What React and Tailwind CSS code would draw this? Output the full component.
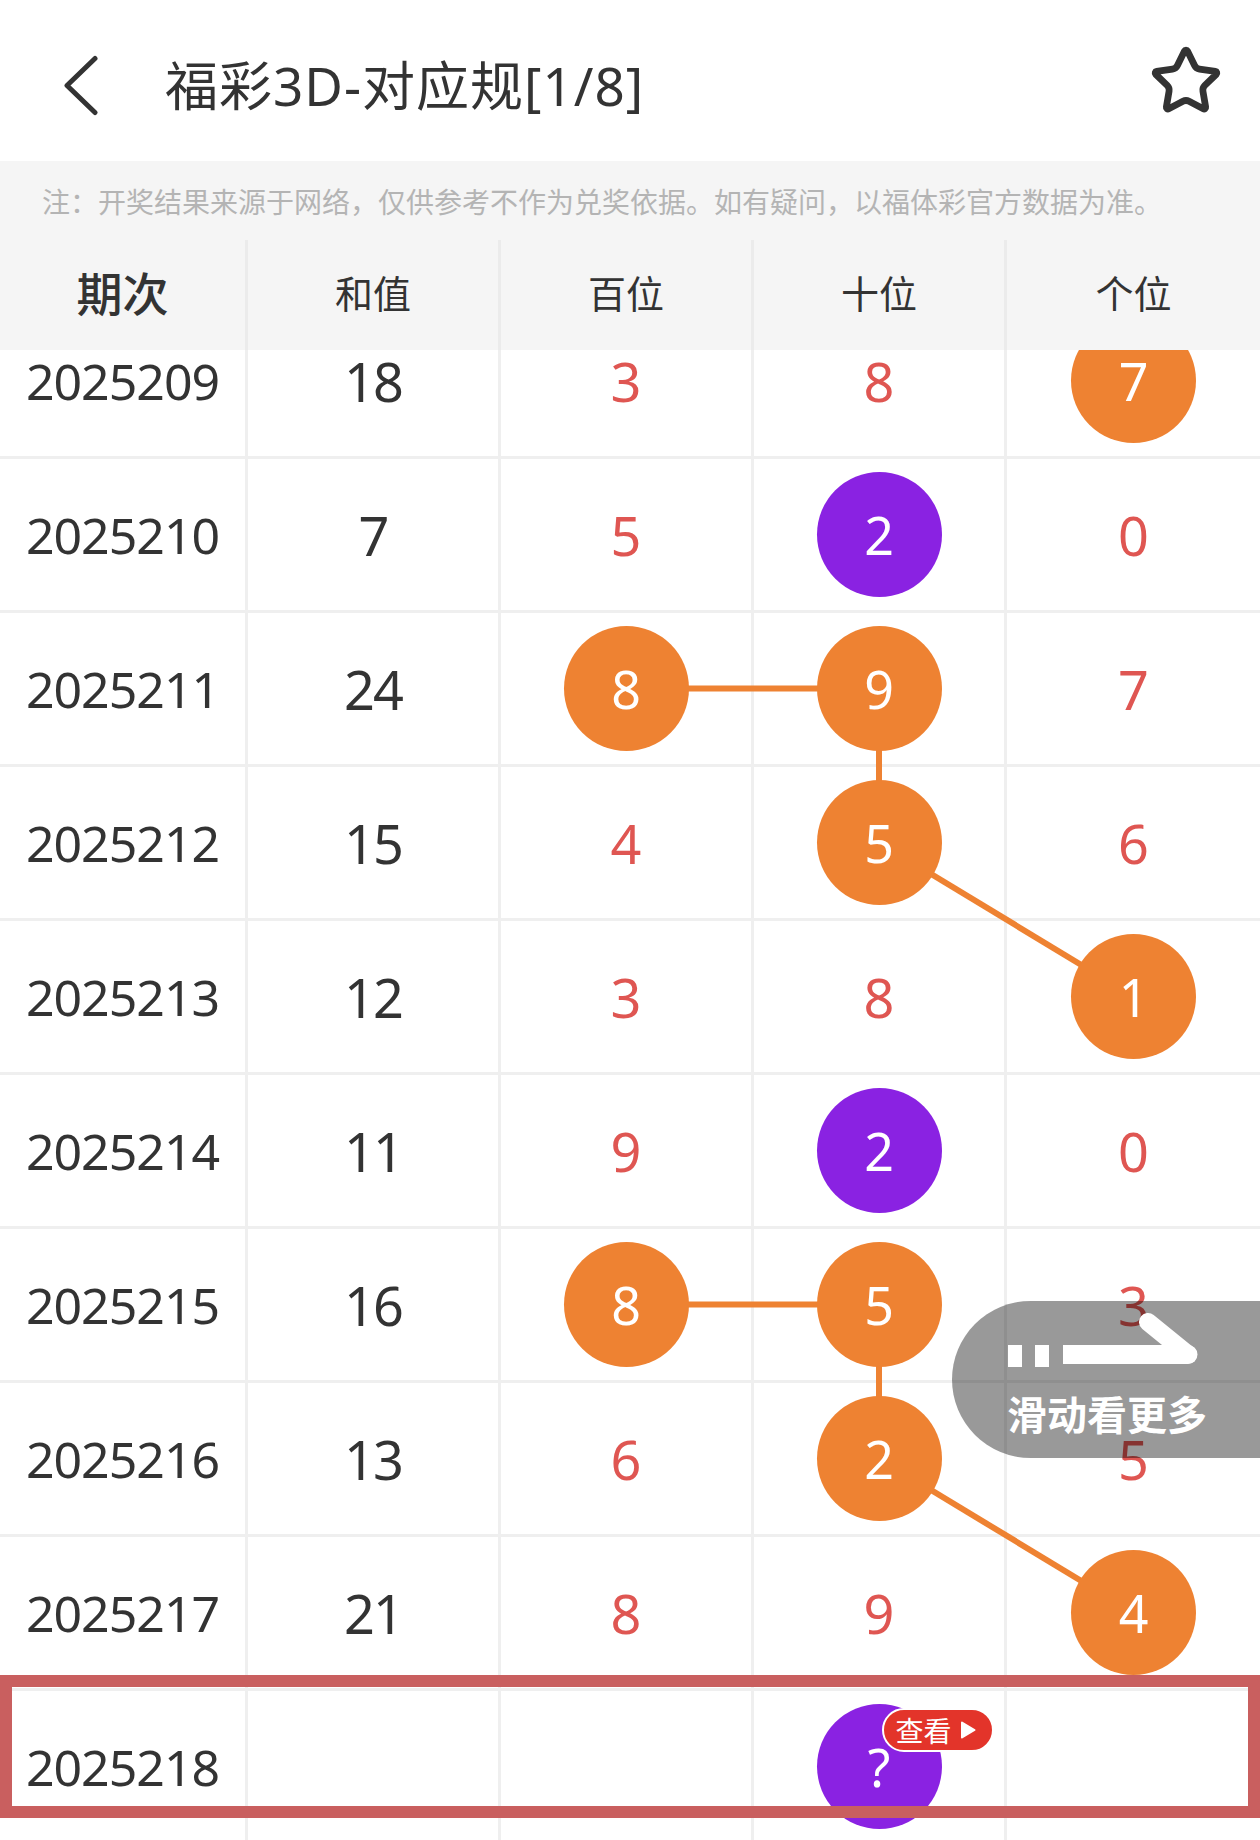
import { Star } from 'lucide-react';

const ROWS = [
  { no: '2025209', sum: '18', d: [['3'], ['8'], ['7', 'o']] },
  { no: '2025210', sum: '7', d: [['5'], ['2', 'p'], ['0']] },
  { no: '2025211', sum: '24', d: [['8', 'o'], ['9', 'o'], ['7']] },
  { no: '2025212', sum: '15', d: [['4'], ['5', 'o'], ['6']] },
  { no: '2025213', sum: '12', d: [['3'], ['8'], ['1', 'o']] },
  { no: '2025214', sum: '11', d: [['9'], ['2', 'p'], ['0']] },
  { no: '2025215', sum: '16', d: [['8', 'o'], ['5', 'o'], ['3']] },
  { no: '2025216', sum: '13', d: [['6'], ['2', 'o'], ['5']] },
  { no: '2025217', sum: '21', d: [['8'], ['9'], ['4', 'o']] },
  { no: '2025218', sum: '', d: [[''], ['?', 'p', true], ['']] },
];

// [row, col] pairs joined by the orange trend line
const LINKS = [
  [[2, 2], [2, 3]],
  [[2, 3], [3, 3]],
  [[3, 3], [4, 4]],
  [[6, 2], [6, 3]],
  [[6, 3], [7, 3]],
  [[7, 3], [8, 4]],
];

const COL_X = [122.5, 373, 626, 879, 1133.5];
const ROW_H = 154;
const rowY = (i) => i * ROW_H + 75.5;

const NUM_FONT = { fontFamily: '"Noto Sans", "Noto Sans CJK SC", sans-serif' };
const CJK_FONT = { fontFamily: '"Noto Sans CJK SC", "Noto Sans", sans-serif' };

function Ball({ value, kind, badge }) {
  return (
    <div
      className={`relative z-10 w-[125px] h-[125px] rounded-full flex items-center justify-center text-white text-[52px] leading-none ${
        kind === 'o' ? 'bg-[#ee8232]' : 'bg-[#8a22e2]'
      }`}
    >
      {value}
      {badge && (
        <div
          className="absolute left-[65px] top-[4px] h-[44px] w-[112px] rounded-full border-2 border-white bg-[#e3342a] flex items-center pl-[12px] gap-[8px] text-[28px] leading-none text-white"
          style={CJK_FONT}
        >
          查看
          <svg width="16" height="18" viewBox="0 0 16 18">
            <path d="M2 1.5 L14.5 9 L2 16.5 Z" fill="white" stroke="white" strokeWidth="2" strokeLinejoin="round" />
          </svg>
        </div>
      )}
    </div>
  );
}

function HeadCell({ children, big, last }) {
  return (
    <div
      className={`flex items-center justify-center pb-[7px] text-[#333] ${last ? '' : 'border-r-[3px] border-[#ebebeb]'} ${
        big ? 'text-[46px] font-medium' : 'text-[38px]'
      }`}
      style={CJK_FONT}
    >
      {children}
    </div>
  );
}

export default function App() {
  return (
    <div className="relative w-[1260px] h-[1840px] overflow-hidden bg-white" style={NUM_FONT}>
      {/* top bar */}
      <div className="h-[161px] flex items-center bg-white">
        <svg className="ml-[62px]" width="40" height="70" viewBox="0 0 40 70">
          <polyline
            points="33,12.5 5,39.5 33,66.5"
            fill="none"
            stroke="#333"
            strokeWidth="5"
            strokeLinecap="round"
            strokeLinejoin="round"
          />
        </svg>
        <h1 className="ml-[63px] mt-[9px] text-[53px] leading-none tracking-[1px] text-[#333]" style={NUM_FONT}>
          福彩3D-对应规[1/8]
        </h1>
        <Star className="ml-auto mr-[37px]" size={74} strokeWidth={2.2} color="#333" />
      </div>

      {/* notice */}
      <div
        className="h-[79px] bg-[#f5f5f5] flex items-center pl-[42px] text-[28px] text-[#b4b4b4] leading-none"
        style={CJK_FONT}
      >
        注：开奖结果来源于网络，仅供参考不作为兑奖依据。如有疑问，以福体彩官方数据为准。
      </div>

      {/* table head */}
      <div className="h-[110px] bg-[#f5f5f5] grid grid-cols-[248px_253px_253px_253px_253px]">
        <HeadCell big>期次</HeadCell>
        <HeadCell>和值</HeadCell>
        <HeadCell>百位</HeadCell>
        <HeadCell>十位</HeadCell>
        <HeadCell last>个位</HeadCell>
      </div>

      {/* table body */}
      <div className="relative h-[1490px] overflow-hidden bg-white">
        <div className="relative -mt-[45px]">
          {ROWS.map((row) => (
            <div
              key={row.no}
              className="h-[154px] grid grid-cols-[248px_253px_253px_253px_253px] border-b-[3px] border-[#efefef]"
            >
              <div className="flex items-center justify-center border-r-[3px] border-[#efefef] text-[50px] leading-none tracking-[-1px] text-[#333]">
                {row.no}
              </div>
              <div className="flex items-center justify-center border-r-[3px] border-[#efefef] text-[54px] leading-none tracking-[-2px] text-[#333]">
                {row.sum}
              </div>
              {row.d.map(([value, kind, badge], i) => (
                <div
                  key={i}
                  className={`flex items-center justify-center text-[54px] leading-none text-[#df5652] ${
                    i < 2 ? 'border-r-[3px] border-[#efefef]' : ''
                  }`}
                >
                  {kind ? <Ball value={value} kind={kind} badge={badge} /> : value}
                </div>
              ))}
            </div>
          ))}

          <svg className="absolute left-0 top-0 pointer-events-none" width="1260" height="1540">
            {LINKS.map(([a, b], i) => (
              <line
                key={i}
                x1={COL_X[a[1]]}
                y1={rowY(a[0])}
                x2={COL_X[b[1]]}
                y2={rowY(b[0])}
                stroke="#ee8232"
                strokeWidth="6"
              />
            ))}
          </svg>
        </div>

        {/* current issue frame */}
        <div className="absolute left-0 right-0 top-[1325px] h-[143px] border-[12px] border-[#c95f5f] z-20 pointer-events-none" />
      </div>

      {/* swipe hint */}
      <div className="absolute left-[952px] top-[1301px] w-[308px] h-[157px] rounded-l-full bg-black/40 z-30 pl-[48px] pt-[4px]">
        <svg width="200" height="70" viewBox="0 0 200 70" className="block">
          <rect x="8" y="40" width="14" height="22" fill="white" />
          <rect x="35" y="40" width="14" height="22" fill="white" />
          <rect x="63" y="40" width="120" height="19" fill="white" />
          <line x1="148" y1="17" x2="188" y2="49.5" stroke="white" strokeWidth="18" strokeLinecap="round" />
          <line x1="170" y1="49.5" x2="188" y2="49.5" stroke="white" strokeWidth="19" strokeLinecap="round" />
        </svg>
        <div className="ml-[7px] mt-[18px] text-[40px] font-bold leading-none text-white" style={CJK_FONT}>
          滑动看更多
        </div>
      </div>
    </div>
  );
}
